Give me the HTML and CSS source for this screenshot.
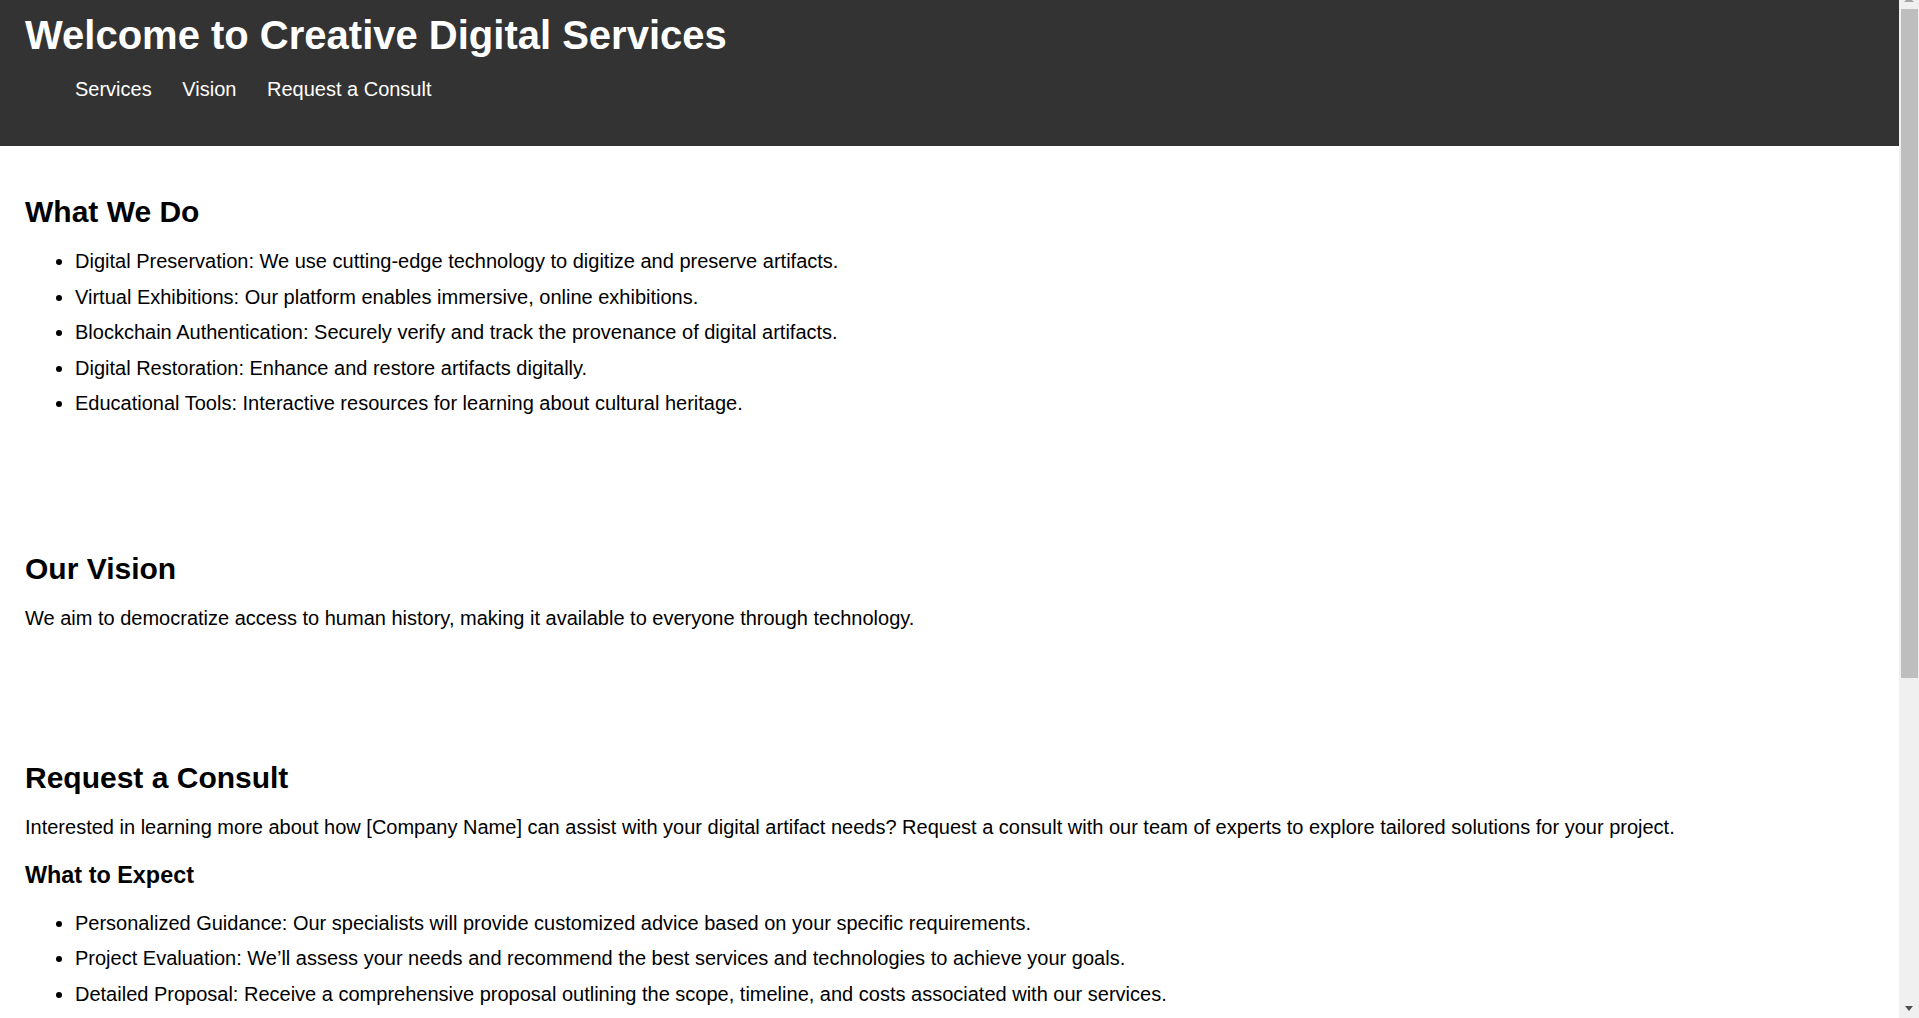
FILE: index.html
```html
<!DOCTYPE html>
<html lang="en">
<head>
<meta charset="utf-8">
<title>Creative Digital Services</title>
<link rel="stylesheet" href="styles.css">
</head>
<body>
<header class="site-header">
  <h1 class="site-title">Welcome to Creative Digital Services</h1>
  <nav class="site-nav">
    <ul class="nav-list">
      <li class="nav-item"><a class="nav-link" href="#services">Services</a></li>
      <li class="nav-item"><a class="nav-link" href="#vision">Vision</a></li>
      <li class="nav-item"><a class="nav-link" href="#consult">Request a Consult</a></li>
    </ul>
  </nav>
</header>
<main class="content">
  <section class="section" id="services">
    <h2 class="section-title">What We Do</h2>
    <ul class="bullet-list">
      <li>Digital Preservation: We use cutting-edge technology to digitize and preserve artifacts.</li>
      <li>Virtual Exhibitions: Our platform enables immersive, online exhibitions.</li>
      <li>Blockchain Authentication: Securely verify and track the provenance of digital artifacts.</li>
      <li>Digital Restoration: Enhance and restore artifacts digitally.</li>
      <li>Educational Tools: Interactive resources for learning about cultural heritage.</li>
    </ul>
  </section>
  <section class="section section-short" id="vision">
    <h2 class="section-title">Our Vision</h2>
    <p class="text">We aim to democratize access to human history, making it available to everyone through technology.</p>
  </section>
  <section class="section" id="consult">
    <h2 class="section-title">Request a Consult</h2>
    <p class="text">Interested in learning more about how [Company Name] can assist with your digital artifact needs? Request a consult with our team of experts to explore tailored solutions for your project.</p>
    <h3 class="sub-title">What to Expect</h3>
    <ul class="bullet-list">
      <li>Personalized Guidance: Our specialists will provide customized advice based on your specific requirements.</li>
      <li>Project Evaluation: We’ll assess your needs and recommend the best services and technologies to achieve your goals.</li>
      <li>Detailed Proposal: Receive a comprehensive proposal outlining the scope, timeline, and costs associated with our services.</li>
      <li>Ongoing Support: Benefit from continued assistance as your project moves from planning to completion.</li>
    </ul>
    <h3 class="sub-title">How to Request a Consult</h3>
    <p class="text">Fill out the form below, and a member of our team will contact you within 48 hours to schedule your consultation.</p>
    <form class="consult-form">
      <label class="field-label" for="name">Name:</label>
      <input class="field-input" type="text" id="name" name="name">
      <label class="field-label" for="email">Email:</label>
      <input class="field-input" type="email" id="email" name="email">
      <button class="submit-btn" type="submit">Submit Request</button>
    </form>
  </section>
</main>
<div class="fake-scrollbar" aria-hidden="true">
  <div class="scroll-btn scroll-btn-up"><span class="arrow-up"></span></div>
  <div class="scroll-thumb"></div>
  <div class="scroll-track-rest"></div>
  <div class="scroll-btn scroll-btn-down"><span class="arrow-down"></span></div>
</div>
</body>
</html>
```
FILE: styles.css
```css
html, body {
  margin: 0;
  padding: 0;
}

body {
  font-family: "Liberation Sans", Arial, sans-serif;
  font-size: 20px;
  color: #000;
  background: #fff;
}

.site-header {
  background: #333;
  color: #fff;
  padding: 13px 25px 0;
}

.site-title {
  margin: 0;
  font-size: 40px;
  font-weight: bold;
  line-height: normal;
}

.nav-list {
  list-style: none;
  margin: 20px 0 0;
  padding: 0 0 45px 50px;
}

.nav-item {
  display: inline;
  margin-right: 25px;
}

.nav-link {
  color: #fff;
  text-decoration: none;
}

.content {
  display: flex;
  flex-direction: column;
  gap: 38.5px;
}

.section {
  padding: 29px 25px;
}

.section-short {
  padding-bottom: 24px;
}

.section-title {
  font-size: 30px;
  font-weight: bold;
  margin: 20px 0 21px;
}

.sub-title {
  font-size: 23.4px;
  font-weight: bold;
  margin: 22.7px 0;
}

.text {
  margin: 20px 0;
}

.bullet-list {
  margin: 20px 0;
  padding-left: 50px;
}

.bullet-list li {
  margin-bottom: 12.6px;
}

.consult-form {
  display: flex;
  flex-direction: column;
  align-items: flex-start;
  gap: 8px;
  max-width: 600px;
}

.field-label {
  font-weight: bold;
}

.field-input {
  width: 100%;
  box-sizing: border-box;
  padding: 8px;
  font: inherit;
  border: 1px solid #ccc;
}

.submit-btn {
  margin-top: 8px;
  padding: 10px 20px;
  font: inherit;
  background: #333;
  color: #fff;
  border: none;
}

/* Imitation of the browser's classic vertical scrollbar */
.fake-scrollbar {
  position: fixed;
  top: 0;
  right: 0;
  width: 20px;
  height: 100vh;
  background: #f0f0f0;
  display: flex;
  flex-direction: column;
  overflow: hidden;
}

.scroll-btn {
  position: relative;
  flex: none;
}

.scroll-btn-up {
  height: 9px;
}

.scroll-btn-down {
  height: 19px;
}

.arrow-up {
  position: absolute;
  left: 5px;
  top: -3px;
  width: 0;
  height: 0;
  border-left: 5px solid transparent;
  border-right: 5px solid transparent;
  border-bottom: 5px solid #a3a3a3;
}

.arrow-down {
  position: absolute;
  left: 6px;
  top: 7px;
  width: 0;
  height: 0;
  border-left: 4.5px solid transparent;
  border-right: 4.5px solid transparent;
  border-top: 5px solid #505050;
}

.scroll-thumb {
  flex: none;
  height: 669px;
  margin: 0 1px 0 2px;
  background: #bebebe;
}

.scroll-track-rest {
  flex: 1;
}
```
